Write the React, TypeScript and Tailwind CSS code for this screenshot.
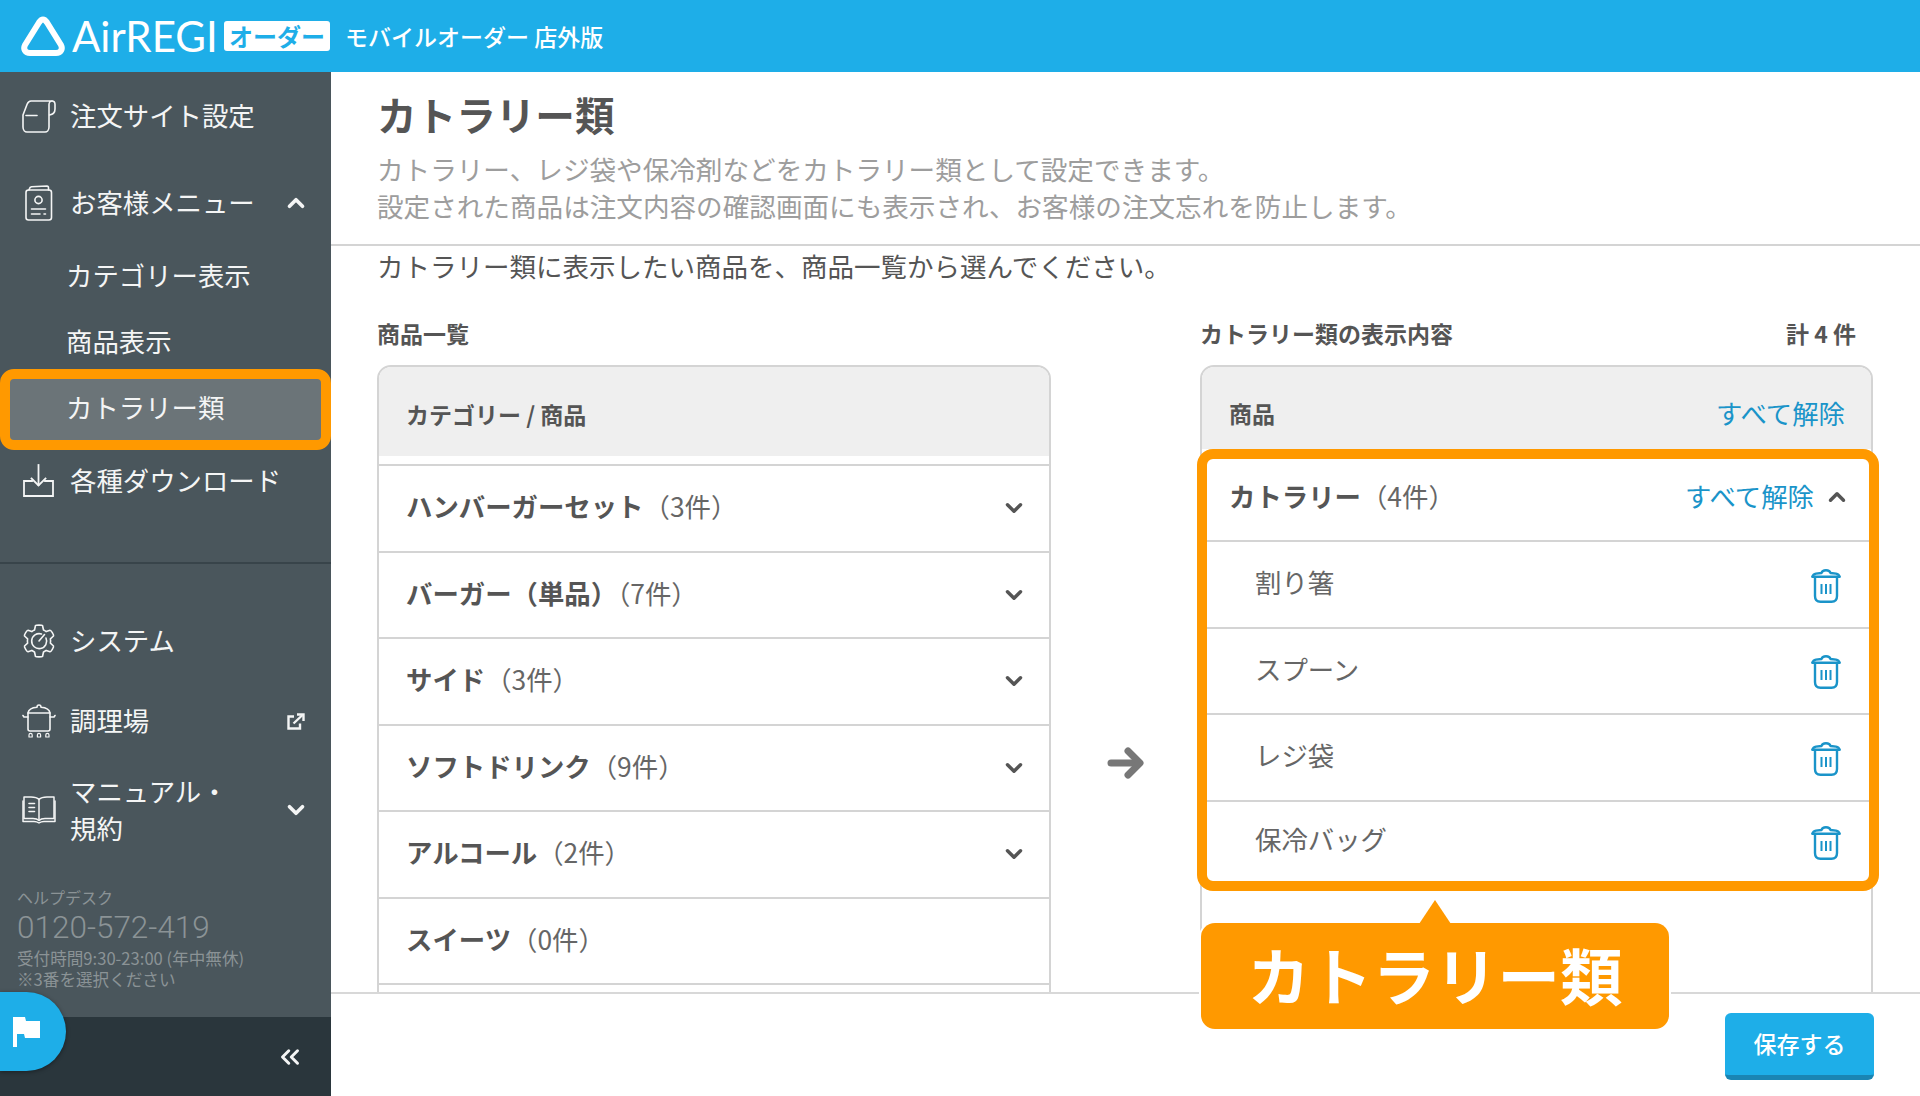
import { ChevronDown, ChevronUp, ChevronsLeft } from "lucide-react";

const leftRows = [
  ["ハンバーガーセット", "（3件）"],
  ["バーガー（単品）", "（7件）"],
  ["サイド", "（3件）"],
  ["ソフトドリンク", "（9件）"],
  ["アルコール", "（2件）"],
  ["スイーツ", "（0件）"],
  ["", ""],
];

const rightRows = ["割り箸", "スプーン", "レジ袋", "保冷バッグ"];

const TrashIcon = () => (
  <svg className="mt-[3px]" width="30" height="34" viewBox="0 0 30 34" fill="none" stroke="#1a94c9" strokeWidth="2.4" strokeLinecap="round" strokeLinejoin="round">
    <path d="M1.5 7.5 C2 5.5 3 5 5 4.6 L10.5 4 C11 2 12 1.2 15 1.2 C18 1.2 19 2 19.5 4 L25 4.6 C27 5 28 5.5 28.5 7.5" />
    <path d="M1.5 7.8 H28.5" />
    <path d="M4 8 V27 C4 31 6 32.8 9.5 32.8 H20.5 C24 32.8 26 31 26 27 V8" />
    <path d="M10.5 15 V25 M15 15 V25 M19.5 15 V25" strokeWidth="2" strokeLinecap="butt" />
  </svg>
);

const OrderIcon = () => (
  <svg width="34" height="33" viewBox="0 0 34 33" fill="none" stroke="#f4f5f5" strokeWidth="1.6" strokeLinecap="round" strokeLinejoin="round">
    <path d="M1 15 V27 C1 30 3 32 5 32 H23 C25 32 27 30 27 27 V4.5 C27 2.5 28.5 1 30 1 H9 C7 1 6 2 5.2 4 L1 15" />
    <path d="M30 1 C32 1 33 2.5 33 4.5 V9 C33 12 31 14.5 27.5 15" />
    <path d="M4 15.5 H15" />
  </svg>
);

const MenuIcon = () => (
  <svg width="28" height="36" viewBox="0 0 28 36" fill="none" stroke="#f4f5f5" strokeWidth="1.6" strokeLinecap="round" strokeLinejoin="round">
    <rect x="1" y="5" width="25.5" height="30" rx="2.5" />
    <path d="M4 5 L4.5 3.5 C4.8 2.5 5.5 2 6.5 1.8 L22 1 C23 1 23.5 1.8 23.5 3 V5" />
    <circle cx="13.5" cy="15" r="3.6" />
    <path d="M6.5 24 H20.5 M6.5 29 H15 M19 29 H20.5" />
  </svg>
);

const DownloadIcon = () => (
  <svg className="-mt-[2px]" width="31" height="33" viewBox="0 0 31 33" fill="none" stroke="#f4f5f5" strokeWidth="1.8" strokeLinecap="square">
    <path d="M15.5 1 V21" />
    <path d="M8.5 14.5 L15.5 21.5 L22.5 14.5" />
    <path d="M9 17 H1 V32 H30 V17 H22" />
  </svg>
);

const GearIcon = () => (
  <svg width="34" height="34" viewBox="0 0 34 34" fill="none" stroke="#f4f5f5" strokeWidth="1.6" strokeLinejoin="round" strokeLinecap="round">
    <path d="M13.5 1.5 C14 1 20 1 20.5 1.5 L21.5 6 C22.5 6.4 23.3 6.9 24.2 7.6 L28 6.3 C29 6 32 11 31.5 12 L28.4 14.8 C28.6 16 28.6 18 28.4 19.2 L31.5 22 C32 23 29 28 28 27.7 L24.2 26.4 C23.3 27.1 22.5 27.6 21.5 28 L20.5 32.5 C20 33 14 33 13.5 32.5 L12.5 28 C11.5 27.6 10.7 27.1 9.8 26.4 L6 27.7 C5 28 2 23 2.5 22 L5.6 19.2 C5.4 18 5.4 16 5.6 14.8 L2.5 12 C2 11 5 6 6 6.3 L9.8 7.6 C10.7 6.9 11.5 6.4 12.5 6 Z" />
    <path d="M24 14 A7.5 7.5 0 1 1 19.5 10" />
    <path d="M17 17 L22.5 10.5" />
  </svg>
);

const PotIcon = () => (
  <svg width="34" height="34" viewBox="0 0 34 34" fill="none" stroke="#f4f5f5" strokeWidth="1.6" strokeLinecap="round" strokeLinejoin="round">
    <path d="M17 1 C15.5 1 15 2 15 3.2 C9 3.6 6.5 6 6 9 H28 C27.5 6 25 3.6 19 3.2 C19 2 18.5 1 17 1" />
    <path d="M6 9 V25 C6 26 7 27 8 27 H26 C27 27 28 26 28 25 V9" />
    <path d="M6 13 H2 L1 11.5 M28 13 H32 L33 11.5" />
    <path d="M7 33 V31 A1.6 1.6 0 0 1 10.2 31 V33 Z M15.4 33 V31 A1.6 1.6 0 0 1 18.6 31 V33 Z M23.8 33 V31 A1.6 1.6 0 0 1 27 31 V33 Z" strokeWidth="1.2" />
  </svg>
);

const BookIcon = () => (
  <svg width="34" height="28" viewBox="0 0 34 28" fill="none" stroke="#f4f5f5" strokeWidth="1.5" strokeLinecap="round" strokeLinejoin="round">
    <path d="M17 3.5 C15 1.5 12 1 9 1 H2 V22.5 H11 C13.5 22.5 15.5 23 17 24.5 C18.5 23 20.5 22.5 23 22.5 H32 V1 H25 C22 1 19 1.5 17 3.5 Z" />
    <path d="M17 3.5 V24.5" />
    <path d="M1 5 V25.5 H12 C14 25.5 15.5 26 17 27 C18.5 26 20 25.5 22 25.5 H33 V5" />
    <path d="M7 7.5 H12.5 M7 11.5 H12.5 M7 15.5 H12.5" strokeWidth="1.6" />
  </svg>
);

const ExternalIcon = () => (
  <svg width="18" height="17" viewBox="0 0 18 17" fill="none" stroke="#f4f5f5" strokeWidth="2.4">
    <path d="M7 3.5 H1.5 V15.5 H13 V10.5" />
    <path d="M6.5 10.5 L15.5 2" />
    <path d="M10 1.5 H16.5 V8" />
  </svg>
);

const SideItem = ({ icon, label, right }: { icon: React.ReactNode; label: React.ReactNode; right?: React.ReactNode }) => (
  <div className="flex items-center h-full">
    <div className="w-[70px] flex justify-center pl-[8px] pr-[1px] shrink-0">{icon}</div>
    <span className="flex-1 text-[26.4px] leading-[37px] text-[#f4f5f5] -mt-[3px]">{label}</span>
    {right && <div className="w-[36px] mr-[17px] flex justify-center">{right}</div>}
  </div>
);

const Sidebar = () => (
  <aside className="relative w-[331px] shrink-0 bg-[#4a565c] flex flex-col">
    <div className="h-[88px]">
      <SideItem icon={<OrderIcon />} label="注文サイト設定" />
    </div>
    <div className="h-[86px]">
      <SideItem
        icon={<MenuIcon />}
        label="お客様メニュー"
        right={<ChevronUp size={26} strokeWidth={3.4} color="#f4f5f5" />}
      />
    </div>
    <div className="h-[60px] pl-[66px] pb-[3px] flex items-center text-[26.4px] text-[#f4f5f5]">カテゴリー表示</div>
    <div className="h-[63px] pt-[6px] pl-[66px] flex items-center text-[26.4px] text-[#f4f5f5]">商品表示</div>
    <div className="h-[81px] border-[10px] border-[#ff9900] rounded-[14px] bg-[#6b7478] pl-[56px] pb-[6px] flex items-center text-[26.4px] text-[#f4f5f5]">
      カトラリー類
    </div>
    <div className="h-[62px]">
      <SideItem icon={<DownloadIcon />} label="各種ダウンロード" />
    </div>
    <div className="mt-[50px] h-[2px] bg-[#38444a]" />
    <div className="mt-[45px] h-[64px]">
      <SideItem icon={<GearIcon />} label="システム" />
    </div>
    <div className="mt-[16px] h-[64px]">
      <SideItem icon={<PotIcon />} label="調理場" right={<ExternalIcon />} />
    </div>
    <div className="mt-[20px] h-[74px]">
      <SideItem
        icon={<BookIcon />}
        label={
          <>
            マニュアル・
            <br />
            規約
          </>
        }
        right={<ChevronDown size={26} strokeWidth={3.4} color="#f4f5f5" />}
      />
    </div>
    <div className="mt-[38px] pl-[17px] flex flex-col text-[#8b9396]">
      <div className="h-[24px] leading-[24px] text-[16px]">ヘルプデスク</div>
      <div className="h-[38px] leading-[38px] text-[31.5px] font-light font-['Roboto',sans-serif]">0120-572-419</div>
      <div className="h-[22px] leading-[22px] text-[16.6px]">受付時間9:30-23:00 (年中無休)</div>
      <div className="h-[20px] leading-[20px] text-[16.6px]">※3番を選択ください</div>
    </div>
    <div className="mt-auto h-[79px] bg-[#2a363c] flex items-center justify-end pr-[26px]">
      <ChevronsLeft size={30} strokeWidth={2.4} color="#f4f5f5" />
    </div>
    <button className="absolute left-0 bottom-[25px] w-[66px] h-[79px] rounded-r-[40px] bg-[#1eaee8] shadow-[0_1px_4px_rgba(0,0,0,0.4)] flex items-center pl-[13px]">
      <svg width="27" height="30" viewBox="0 0 27 30" fill="#ffffff">
        <path d="M0 0 H12 L13 4 H27 V21 H12 L11 17 H4 V30 H0 Z" />
      </svg>
    </button>
  </aside>
);

const App = () => {
  return (
    <div className="relative w-[1920px] h-[1096px] overflow-hidden bg-white flex flex-col font-['Noto_Sans_CJK_JP','Noto_Sans',sans-serif]">
      <header className="h-[72px] shrink-0 bg-[#1eaee8] flex items-center text-white">
        <svg className="ml-[20px] shrink-0" width="46" height="40" viewBox="0 0 46 40" fill="none" stroke="#fff" strokeWidth="6" strokeLinejoin="round">
          <path d="M23 3.5 C25 3.5 26 5 27 6.5 L41 29 C43 33 41 37 36 37 H10 C5 37 3 33 5 29 L19 6.5 C20 5 21 3.5 23 3.5 Z" />
        </svg>
        <span className="ml-[6px] w-[152px] text-[42px] leading-none font-['Lato',sans-serif]">AirREGI</span>
        <span className="h-[30px] w-[106px] rounded-[3px] bg-white text-[#1eaee8] text-[24px] font-bold leading-[30px] text-center">オーダー</span>
        <span className="ml-[15px] text-[23px] font-medium">モバイルオーダー 店外版</span>
      </header>

      <div className="flex-1 min-h-0 flex">
        <Sidebar />
        <main className="flex-1 min-w-0 flex flex-col">
          <div className="flex-1 min-h-0 overflow-hidden">
            <div className="h-[174px] border-b-2 border-[#d4d4d4] pl-[46px] pt-[20px]">
              <h1 className="text-[39.6px] leading-[44px] font-bold text-[#555]">カトラリー類</h1>
              <p className="mt-[14px] text-[26.6px] leading-[37px] text-[#9d9d9d]">
                カトラリー、レジ袋や保冷剤などをカトラリー類として設定できます。
                <br />
                設定された商品は注文内容の確認画面にも表示され、お客様の注文忘れを防止します。
              </p>
            </div>
            <p className="pl-[46px] pt-[1px] text-[26.5px] leading-[37px] text-[#555]">
              カトラリー類に表示したい商品を、商品一覧から選んでください。
            </p>
            <div className="mt-[34px] pl-[46px] flex gap-[149px]">
              <section className="w-[674px]">
                <h2 className="h-[32px] text-[23px] leading-[30px] font-bold text-[#555]">商品一覧</h2>
                <div className="mt-[15px] h-[700px] border-2 border-[#d4d4d4] rounded-t-[14px] overflow-hidden">
                  <div className="h-[89px] bg-[#efefef] pl-[27px] pt-[6px] flex items-center text-[23px] font-bold text-[#555]">
                    カテゴリー / 商品
                  </div>
                  <div className="h-[8px]" />
                  {leftRows.map(([name, count], i) => (
                    <div
                      key={i}
                      className="h-[86.5px] border-t-2 border-[#d4d4d4] pl-[27px] pr-[22px] flex items-center justify-between"
                    >
                      <span className="text-[26.4px] text-[#666] -mt-[4px]">
                        <span className="font-bold text-[#555]">{name}</span>
                        {count}
                      </span>
                      {name && count !== "（0件）" && <ChevronDown size={26} strokeWidth={3.2} color="#555" />}
                    </div>
                  ))}
                </div>
              </section>

              <section className="w-[673px]">
                <div className="h-[32px] flex justify-between pr-[17px] text-[23px] leading-[30px] font-bold text-[#555]">
                  <h2>カトラリー類の表示内容</h2>
                  <span>計 4 件</span>
                </div>
                <div className="mt-[15px] h-[700px] border-2 border-[#d4d4d4] rounded-t-[14px]">
                  <div className="h-[82px] rounded-t-[12px] bg-[#efefef] pl-[27px] pr-[26px] pt-[10px] flex items-center justify-between">
                    <span className="text-[23px] font-bold text-[#555]">商品</span>
                    <span className="text-[26.4px] text-[#1a94c9]">すべて解除</span>
                  </div>
                  <div className="ml-[-5px] mr-[-8px] border-[10px] border-[#ff9900] rounded-[16px] bg-white relative">
                    <div className="h-[81px] pl-[22px] pr-[19px] pb-[8px] flex items-center justify-between">
                      <span className="text-[26.4px] text-[#666]">
                        <span className="font-bold text-[#555]">カトラリー</span>（4件）
                      </span>
                      <span className="flex items-center gap-[10px]">
                        <span className="text-[26.4px] text-[#1a94c9]">すべて解除</span>
                        <ChevronUp className="mt-[3px]" size={26} strokeWidth={3.2} color="#555" />
                      </span>
                    </div>
                    {rightRows.map((name, i) => (
                      <div
                        key={name}
                        className={`border-t-2 border-[#d4d4d4] pl-[48px] pr-[28px] flex items-center justify-between ${i === 3 ? "h-[81px]" : "h-[86.5px]"}`}
                      >
                        <span className="text-[26.4px] text-[#666] -mt-[4px]">{name}</span>
                        <TrashIcon />
                      </div>
                    ))}
                  </div>
                </div>
              </section>
            </div>
          </div>
          <footer className="h-[104px] shrink-0 border-t-2 border-[#d8d8d8] bg-white flex justify-end pr-[46px] pt-[19px]">
            <button className="w-[149px] h-[67px] rounded-[6px] bg-[#1eaee8] border-b-[5px] border-[#1a85b3] text-white text-[23px] font-medium pb-[2px]">
              保存する
            </button>
          </footer>
        </main>
      </div>

      {/* arrow between the two lists */}
      <svg className="absolute left-[1107px] top-[745px]" width="38" height="36" viewBox="0 0 38 36" fill="none" stroke="#777" strokeWidth="7" strokeLinecap="round" strokeLinejoin="round">
        <path d="M4 18 H32" />
        <path d="M21 6 L33 18 L21 30" />
      </svg>

      {/* callout */}
      <div className="absolute left-[1201px] top-[923px] w-[468px] h-[106px] rounded-[14px] bg-[#ff9900] ring-2 ring-white flex items-center justify-center">
        <div className="absolute left-[218px] top-[-23px] w-0 h-0 border-x-[16px] border-b-[24px] border-x-transparent border-b-[#ff9900]" />
        <span className="text-[62.5px] leading-none font-bold text-white -mt-[4px]">カトラリー類</span>
      </div>
    </div>
  );
};

export default App;
